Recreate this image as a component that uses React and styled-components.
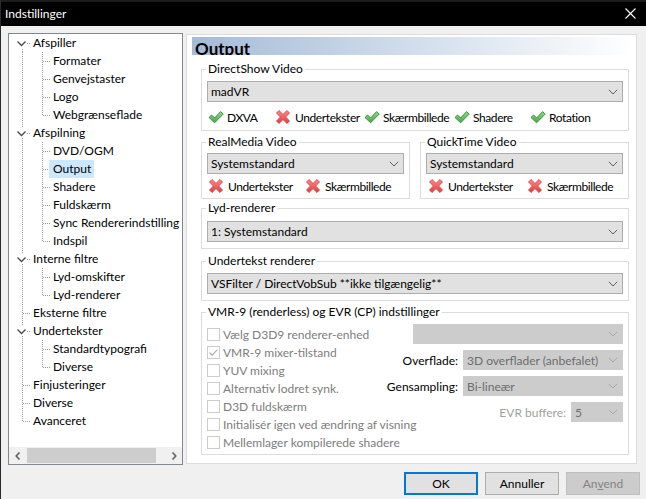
import React from 'react';
import styled, { createGlobalStyle } from 'styled-components';

const Global = createGlobalStyle`
  html, body { margin: 0; padding: 0; background: #f0f0f0; }
  body {
    font-family: "Segoe UI", Lato, "Noto Sans", sans-serif;
    font-size: 12px;
    color: #000;
  }
  * { box-sizing: border-box; }
`;

const Window = styled.div`
  width: 646px;
  height: 499px;
  border-left: 1px solid #2b2b2b;
  background: #f0f0f0;
  display: flex;
  flex-direction: column;
  overflow: hidden;
`;

const TitleBar = styled.div`
  flex: none;
  height: 26px;
  background: #000;
  border-top: 2px solid #1c1c1c;
  color: #fff;
  display: flex;
  align-items: center;
  justify-content: space-between;
  padding: 0 10px 2px 4px;
  font-size: 12px;
`;

const Main = styled.div`
  flex: none;
  display: flex;
  gap: 3px;
  padding: 7px 0 0 7px;
`;

/* ---------- tree ---------- */

const TreeBox = styled.div`
  width: 175px;
  height: 432px;
  border: 1px solid #828790;
  background: #fff;
  display: flex;
  flex-direction: column;
`;

const TreeList = styled.div`
  flex: 1;
  overflow: hidden;
  white-space: nowrap;
`;

const TreeRow = styled.div`
  height: 18px;
  display: flex;
  align-items: center;
`;

const TreeLabel = styled.span`
  height: 18px;
  line-height: 18px;
  padding: 0 3px 0 4px;
  background: ${(p) => (p.$selected ? '#cce8ff' : 'transparent')};
`;

const CellSvg = styled.svg`
  flex: none;
  display: block;
  overflow: visible;
`;

const DOT = '#9a9a9a';

function Connector({ v, h, expander }) {
  return (
    <CellSvg width="20" height="18" viewBox="0 0 20 18">
      {v && (
        <line
          x1="13.5"
          x2="13.5"
          y1={v === 'bottom' ? 9 : 0}
          y2={v === 'top' ? 10 : 18}
          stroke={DOT}
          strokeDasharray="1 1"
        />
      )}
      {h && <line x1="14" x2="22" y1="9.5" y2="9.5" stroke={DOT} strokeDasharray="1 1" />}
      {expander && (
        <>
          <rect x="6" y="4" width="12" height="10" fill="#fff" />
          <polyline points="8.5,7.5 12.5,11.5 16.5,7.5" fill="none" stroke="#4a4a4a" strokeWidth="1.3" />
        </>
      )}
    </CellSvg>
  );
}

const ScrollBar = styled.div`
  flex: none;
  height: 17px;
  background: #f0f0f0;
  display: flex;
  align-items: stretch;
`;

const ScrollArrow = styled.div`
  width: 17px;
  flex: none;
  display: flex;
  align-items: center;
  justify-content: center;
`;

const ScrollTrack = styled.div`
  flex: 1;
  display: flex;
  align-items: center;
  padding-left: 1px;
`;

const ScrollThumb = styled.div`
  width: 129px;
  height: 15px;
  background: #cdcdcd;
`;

const treeData = [
  { label: 'Afspiller', children: ['Formater', 'Genvejstaster', 'Logo', 'Webgrænseflade'] },
  {
    label: 'Afspilning',
    children: ['DVD/OGM', 'Output', 'Shadere', 'Fuldskærm', 'Sync Rendererindstilling', 'Indspil'],
  },
  { label: 'Interne filtre', children: ['Lyd-omskifter', 'Lyd-renderer'] },
  { label: 'Eksterne filtre' },
  { label: 'Undertekster', children: ['Standardtypografi', 'Diverse'] },
  { label: 'Finjusteringer' },
  { label: 'Diverse' },
  { label: 'Avanceret' },
];

function Tree() {
  const rows = [];
  treeData.forEach((node, i) => {
    const first = i === 0;
    const last = i === treeData.length - 1;
    rows.push(
      <TreeRow key={node.label + i}>
        <Connector v={first ? 'bottom' : last ? 'top' : 'full'} h expander={!!node.children} />
        <TreeLabel>{node.label}</TreeLabel>
      </TreeRow>
    );
    (node.children || []).forEach((c, j) => {
      rows.push(
        <TreeRow key={node.label + c}>
          <Connector v="full" />
          <Connector v={j === node.children.length - 1 ? 'top' : 'full'} h />
          <TreeLabel $selected={c === 'Output'}>{c}</TreeLabel>
        </TreeRow>
      );
    });
  });
  return (
    <TreeBox>
      <TreeList>{rows}</TreeList>
      <ScrollBar>
        <ScrollArrow>
          <svg width="6" height="8" viewBox="0 0 6 8">
            <polyline points="4.5,0.5 1.2,4 4.5,7.5" fill="none" stroke="#606060" strokeWidth="1.6" />
          </svg>
        </ScrollArrow>
        <ScrollTrack>
          <ScrollThumb />
        </ScrollTrack>
        <ScrollArrow>
          <svg width="6" height="8" viewBox="0 0 6 8">
            <polyline points="1.5,0.5 4.8,4 1.5,7.5" fill="none" stroke="#606060" strokeWidth="1.6" />
          </svg>
        </ScrollArrow>
      </ScrollBar>
    </TreeBox>
  );
}

/* ---------- panel ---------- */

const Panel = styled.div`
  width: 451px;
  height: 430px;
  margin-top: 1px;
  border: 1px solid #dcdcdc;
  background: #fff;
  padding: 2px 1px 0 5px;
  display: flex;
  flex-direction: column;
`;

const Header = styled.div`
  height: 18px;
  overflow: hidden;
  background: linear-gradient(to right, #a4bbd7 0%, #d6e1ee 55%, #ffffff 100%);
  padding: 3px 0 0 3px;
  font-size: 17px;
  font-weight: 700;
  line-height: 18px;
`;

const Content = styled.div`
  padding: 0 6px 0 9px;
  display: flex;
  flex-direction: column;
`;

const Group = styled.fieldset`
  margin: ${(p) => p.$mt || 0}px 0 0 0;
  padding: ${(p) => p.$pt || 5}px 5px ${(p) => p.$pb || 4}px 5px;
  border: 1px solid #dcdcdc;
  min-width: 0;
  flex: ${(p) => (p.$grow ? 1 : 'none')};
`;

const Legend = styled.legend`
  padding: 0 2px;
  margin-left: -1px;
  line-height: 14px;
  color: #000;
`;

const Split = styled.div`
  display: flex;
  gap: 10px;
  margin-top: 4px;
`;

const ComboBox = styled.div`
  height: ${(p) => p.$h || 21}px;
  width: ${(p) => (p.$w ? `${p.$w}px` : 'auto')};
  flex: ${(p) => (p.$w ? 'none' : '1')};
  border: 1px solid ${(p) => (p.$disabled ? '#cccccc' : '#adadad')};
  background: ${(p) => (p.$disabled ? '#cccccc' : '#e1e1e1')};
  color: ${(p) => (p.$disabled ? '#6d6d6d' : '#000')};
  display: flex;
  align-items: center;
  justify-content: space-between;
  padding: 0 4px 0 3px;
  white-space: nowrap;
  overflow: hidden;
`;

const ChevronSvg = styled.svg`
  flex: none;
`;

function Combo({ value = '', disabled, w, h }) {
  return (
    <ComboBox $disabled={disabled} $w={w} $h={h}>
      <span>{value}</span>
      <ChevronSvg width="10" height="6" viewBox="0 0 10 6">
        <polyline
          points="0.8,0.8 5,5 9.2,0.8"
          fill="none"
          stroke={disabled ? '#a8a8a8' : '#606060'}
          strokeWidth="1"
        />
      </ChevronSvg>
    </ComboBox>
  );
}

const StatusRow = styled.div`
  display: flex;
  height: 18px;
  align-items: center;
  margin-top: ${(p) => p.$mt || 0}px;
  padding-left: ${(p) => p.$pl || 1}px;
  letter-spacing: -0.4px;
`;

const Status = styled.div`
  display: flex;
  align-items: center;
  gap: ${(p) => (p.$ok ? 3 : 4)}px;
  width: ${(p) => (p.$w ? `${p.$w}px` : 'auto')};
  flex: none;
  white-space: nowrap;
`;

const IconSvg = styled.svg`
  flex: none;
  display: block;
`;

function CheckIcon() {
  return (
    <IconSvg width="16" height="16" viewBox="0 0 16 16">
      <defs>
        <linearGradient id="gOk" x1="0" y1="0" x2="0" y2="1">
          <stop offset="0" stopColor="#94dc8c" />
          <stop offset="1" stopColor="#43a843" />
        </linearGradient>
      </defs>
      <polygon
        points="1,8.5 3.6,6 6.6,9 12.6,2.6 15.2,5.1 6.6,13.8"
        fill="url(#gOk)"
        stroke="#2f8a2f"
        strokeWidth="0.9"
        strokeLinejoin="round"
      />
    </IconSvg>
  );
}

function CrossIcon() {
  return (
    <IconSvg width="16" height="16" viewBox="0 0 16 16">
      <defs>
        <linearGradient id="gNo" x1="0" y1="0" x2="0" y2="1">
          <stop offset="0" stopColor="#ff8a8a" />
          <stop offset="1" stopColor="#e23c3c" />
        </linearGradient>
      </defs>
      <polygon
        points="1.5,4 4,1.5 8,5.4 12,1.5 14.5,4 10.6,8 14.5,12 12,14.5 8,10.6 4,14.5 1.5,12 5.4,8"
        fill="url(#gNo)"
        stroke="#d23434"
        strokeWidth="0.8"
        strokeLinejoin="round"
      />
    </IconSvg>
  );
}

function StatusItem({ ok, w, children }) {
  return (
    <Status $ok={ok} $w={w}>
      {ok ? <CheckIcon /> : <CrossIcon />}
      <span>{children}</span>
    </Status>
  );
}

/* VMR section */

const VmrBody = styled.div`
  display: flex;
  justify-content: space-between;
  align-items: flex-start;
`;

const CheckList = styled.div`
  flex: 1;
  min-width: 0;
  display: flex;
  flex-direction: column;
  margin-top: 1px;
`;

const CheckRow = styled.div`
  height: 18px;
  display: flex;
  align-items: center;
  gap: 3px;
  color: #7d7d7d;
  white-space: nowrap;
`;

const CheckBox = styled.span`
  width: 13px;
  height: 13px;
  border: 1px solid #cccccc;
  background: #fff;
  display: flex;
  align-items: center;
  justify-content: center;
  flex: none;
`;

const Options = styled.div`
  flex: none;
  display: flex;
  flex-direction: column;
  align-items: flex-end;
  gap: 6px;
`;

const OptionRow = styled.div`
  display: flex;
  align-items: center;
  gap: 5px;
`;

const OptionLabel = styled.span`
  color: ${(p) => (p.$muted ? '#a0a0a0' : '#000')};
  white-space: nowrap;
`;

/* footer */

const Footer = styled.div`
  display: flex;
  justify-content: flex-end;
  gap: 7px;
  padding: 7px 6px 0 0;
`;

const Button = styled.div`
  width: 74px;
  height: 23px;
  display: flex;
  align-items: center;
  justify-content: center;
  background: ${(p) => (p.$disabled ? '#cccccc' : '#e1e1e1')};
  border: ${(p) => (p.$default ? '2px solid #0078d7' : p.$disabled ? '1px solid #bfbfbf' : '1px solid #adadad')};
  color: ${(p) => (p.$disabled ? '#838383' : '#000')};
`;

const CloseIcon = () => (
  <svg width="11" height="11" viewBox="0 0 11 11">
    <path d="M0.5 0.5 L10.5 10.5 M10.5 0.5 L0.5 10.5" stroke="#fff" strokeWidth="1.1" />
  </svg>
);

const vmrChecks = [
  ['Vælg D3D9 renderer-enhed', false],
  ['VMR-9 mixer-tilstand', true],
  ['YUV mixing', false],
  ['Alternativ lodret synk.', false],
  ['D3D fuldskærm', false],
  ['Initialisér igen ved ændring af visning', false],
  ['Mellemlager kompilerede shadere', false],
];

export default function App() {
  return (
    <Window>
      <Global />
      <TitleBar>
        <span>Indstillinger</span>
        <CloseIcon />
      </TitleBar>
      <Main>
        <Tree />
        <Panel>
          <Header>Output</Header>
          <Content>
            <Group $mt={7} $pt={5} $pb={4}>
              <Legend>DirectShow Video</Legend>
              <Combo value="madVR" />
              <StatusRow $mt={6}>
                <StatusItem ok w={67}>DXVA</StatusItem>
                <StatusItem w={89}>Undertekster</StatusItem>
                <StatusItem ok w={90}>Skærmbillede</StatusItem>
                <StatusItem ok w={76}>Shadere</StatusItem>
                <StatusItem ok>Rotation</StatusItem>
              </StatusRow>
            </Group>
            <Split>
              <Group $grow $pt={4} $pb={3}>
                <Legend>RealMedia Video</Legend>
                <Combo value="Systemstandard" />
                <StatusRow $mt={3}>
                  <StatusItem w={97}>Undertekster</StatusItem>
                  <StatusItem>Skærmbillede</StatusItem>
                </StatusRow>
              </Group>
              <Group $grow $pt={4} $pb={3}>
                <Legend>QuickTime Video</Legend>
                <Combo value="Systemstandard" />
                <StatusRow $mt={3} $pl={2}>
                  <StatusItem w={99}>Undertekster</StatusItem>
                  <StatusItem>Skærmbillede</StatusItem>
                </StatusRow>
              </Group>
            </Split>
            <Group $mt={2} $pt={6} $pb={6}>
              <Legend>Lyd-renderer</Legend>
              <Combo value="1: Systemstandard" />
            </Group>
            <Group $mt={5} $pt={5} $pb={6}>
              <Legend>Undertekst renderer</Legend>
              <Combo value="VSFilter / DirectVobSub **ikke tilgængelig**" />
            </Group>
            <Group $mt={4} $pt={5} $pb={3}>
              <Legend>VMR-9 (renderless) og EVR (CP) indstillinger</Legend>
              <VmrBody>
                <CheckList>
                  {vmrChecks.map(([label, checked]) => (
                    <CheckRow key={label}>
                      <CheckBox>
                        {checked && (
                          <svg width="11" height="11" viewBox="0 0 11 11">
                            <polyline
                              points="1.5,5.5 4.2,8.2 9.5,2.5"
                              fill="none"
                              stroke="#a8a8a8"
                              strokeWidth="1.1"
                            />
                          </svg>
                        )}
                      </CheckBox>
                      <span>{label}</span>
                    </CheckRow>
                  ))}
                </CheckList>
                <Options>
                  <Combo disabled w={210} h={20} />
                  <OptionRow>
                    <OptionLabel>Overflade:</OptionLabel>
                    <Combo disabled w={160} h={20} value="3D overflader (anbefalet)" />
                  </OptionRow>
                  <OptionRow>
                    <OptionLabel>Gensampling:</OptionLabel>
                    <Combo disabled w={160} h={20} value="Bi-lineær" />
                  </OptionRow>
                  <OptionRow>
                    <OptionLabel $muted>EVR buffere:</OptionLabel>
                    <Combo disabled w={52} h={20} value="5" />
                  </OptionRow>
                </Options>
              </VmrBody>
            </Group>
          </Content>
        </Panel>
      </Main>
      <Footer>
        <Button $default>OK</Button>
        <Button>Annuller</Button>
        <Button $disabled>
          <span>
            An<u>v</u>end
          </span>
        </Button>
      </Footer>
    </Window>
  );
}
